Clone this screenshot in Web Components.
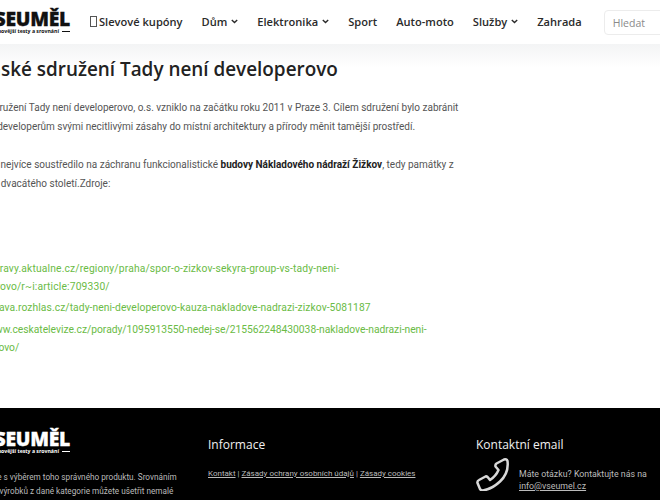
<!DOCTYPE html>
<html lang="cs"><head><meta charset="utf-8"><title>Tady není developerovo</title>
<style>
html,body{margin:0;padding:0;background:#fff;overflow:hidden;height:500px}
body{font-family:"Roboto",sans-serif}
</style></head><body>
<site-page>
  <site-header></site-header>
  <site-article></site-article>
  <site-footer></site-footer>
</site-page>
<script>
function def(name, html, init){
  customElements.define(name, class extends HTMLElement{
    constructor(){super();this.attachShadow({mode:'open'}).innerHTML=html;}
    connectedCallback(){ if(init) init(this); }
  });
}
def('site-page',`<style>:host{display:flex;flex-direction:column;width:760px;height:500px;margin-left:-58px;overflow:hidden}</style><slot></slot>`);

def('site-logo',`<style>
:host{display:block;color:var(--c,#111);width:128px;white-space:nowrap;font-family:"Open Sans",sans-serif}
.m{display:block;font-size:19.4px;font-weight:800;line-height:19px;letter-spacing:-.3px;text-align:right;-webkit-text-stroke:.3px currentColor}
.s{display:flex;align-items:center;justify-content:flex-end;gap:3px;font-size:5.2px;font-weight:700;line-height:7px}
.s i{display:block;width:8px;height:1px;background:currentColor}
</style><span class="m">VSEUMĚL</span><span class="s">Nejnovější testy a srovnání <i></i></span>`);

def('nav-item',`<style>
:host{display:flex;align-items:center;gap:4px;font:600 11.1px/20px "Open Sans",sans-serif;color:#2a2a2a;white-space:nowrap}
svg{display:block;width:7px;height:5px;margin-top:-1px}
:host(:not([caret])) svg{display:none}
</style><slot></slot><svg viewBox="0 0 7 5"><path d="M.8 1l2.700 2.600L6.200 1" fill="none" stroke="#2a2a2a" stroke-width="1.400"/></svg>`);

def('site-header',`<style>
:host{display:flex;flex:none;height:44px;background:#fff;align-items:center;position:relative;z-index:1}
site-logo{margin-top:-1px;flex:none}
nav{display:flex;align-items:center;gap:19px;margin:-1px 0 0 20px}
.tofu{display:inline-block;width:5px;height:9px;border:1px solid #555;margin-right:2px;vertical-align:-1px}
.search{flex:none;margin-left:22px;width:110px;height:25px;box-sizing:border-box;border:1px solid #ececec;border-radius:4px;padding-left:8px;font:10.5px/24px "Open Sans",sans-serif;color:#8a8a8a;margin-top:1px}
</style>
<site-logo></site-logo>
<nav>
<nav-item><span><span class="tofu"></span>Slevové kupóny</span></nav-item>
<nav-item caret>Dům</nav-item>
<nav-item caret>Elektronika</nav-item>
<nav-item>Sport</nav-item>
<nav-item>Auto-moto</nav-item>
<nav-item caret>Služby</nav-item>
<nav-item>Zahrada</nav-item>
</nav>
<div class="search">Hledat</div>`);

def('site-article',`<style>
:host{display:block;flex:1;min-height:0;background:linear-gradient(#f3f4f5,#fff 24px);white-space:nowrap;font-family:"Roboto",sans-serif;font-size:10px;color:#555}
h1{margin:0;padding-top:12px;font:600 18.9px/27px "Open Sans",sans-serif;color:#222;letter-spacing:0}
p{margin:0;line-height:18.500px}
.p1{padding-top:16px}
.p2{padding-top:20px}
b{font-weight:700;color:#222}
.l3{padding-left:4.500px}
.l4{padding-left:4px}
.links{padding:67px 0 0 12px;color:#6abb45;font-size:10.3px}
.links a{color:inherit;text-decoration:none;display:block;line-height:18px}
.a1{letter-spacing:.15px}
.a2{letter-spacing:.07px;margin-top:3px}
.a3{letter-spacing:-.02px;margin-top:4px}
</style>
<h1>Občanské sdružení Tady není developerovo</h1>
<p class="p1">Občanské sdružení Tady není developerovo, o.s. vzniklo na začátku roku 2011 v Praze 3. Cílem sdružení bylo zabránit<br>soukromým developerům svými necitlivými zásahy do místní architektury a přírody měnit tamější prostředí.</p>
<p class="p2"><span class="l3">Sdružení se nejvíce soustředilo na záchranu funkcionalistické <b>budovy Nákladového nádraží Žižkov</b>, tedy památky z</span><br><span class="l4">první třetiny dvacátého století.Zdroje:</span></p>
<div class="links">
<a class="a1">https://zpravy.aktualne.cz/regiony/praha/spor-o-zizkov-sekyra-group-vs-tady-neni-<br>developerovo/r~i:article:709330/</a>
<a class="a2">https://vltava.rozhlas.cz/tady-neni-developerovo-kauza-nakladove-nadrazi-zizkov-5081187</a>
<a class="a3">https://www.ceskatelevize.cz/porady/1095913550-nedej-se/215562248430038-nakladove-nadrazi-neni-<br>developerovo/</a>
</div>`);

def('site-footer',`<style>
:host{display:grid;flex:none;height:92px;box-sizing:border-box;background:#000;color:#bbb;grid-template-columns:266px 268px 1fr;padding-top:21px;font:8px/14px "Roboto",sans-serif;white-space:nowrap;overflow:hidden}
h3{margin:0;font:500 12px/18px "Open Sans",sans-serif;color:#f0f0f0;padding-top:7px}
a{color:inherit;text-decoration:underline}
.about p{margin:15px 0 0;line-height:14px;font-size:8.2px}
.f2{padding-left:3px}
.links{margin-top:13px}
.contact{display:flex;gap:9px;margin-top:3px;font-size:8.8px;line-height:12.500px}
.contact svg{width:34px;height:34px;flex:none;display:block}
.contact div{padding-top:10.500px}
</style>
<div class="about"><site-logo style="--c:#fff"></site-logo><p>Vám pomůžeme s výběrem toho správného produktu. Srovnáním<br><span class="f2">vícero různých výrobků z dané kategorie můžete ušetřit nemalé</span></p></div>
<div><h3>Informace</h3><div class="links"><a>Kontakt</a> | <a>Zásady ochrany osobních údajů</a> | <a>Zásady cookies</a></div></div>
<div><h3>Kontaktní email</h3><div class="contact"><svg viewBox="6 5 34 34"><path d="M26.500 11.500L34 7.500Q36.500 6.500 37.500 9Q39 21 30 29.500Q22 37 13 38.500Q11 38.500 10 37L7.500 31Q7 29 9 28L15.500 24.500Q17 24 18 25.500L20 28Q26 24 28.500 18L25.500 14.500Q25 12.500 26.500 11.500Z" fill="none" stroke="#d8d8d8" stroke-width="2.500" stroke-linejoin="round"/></svg><div>Máte otázku? Kontaktujte nás na<br><a>info@vseumel.cz</a></div></div></div>`);
</script>
</body></html>
